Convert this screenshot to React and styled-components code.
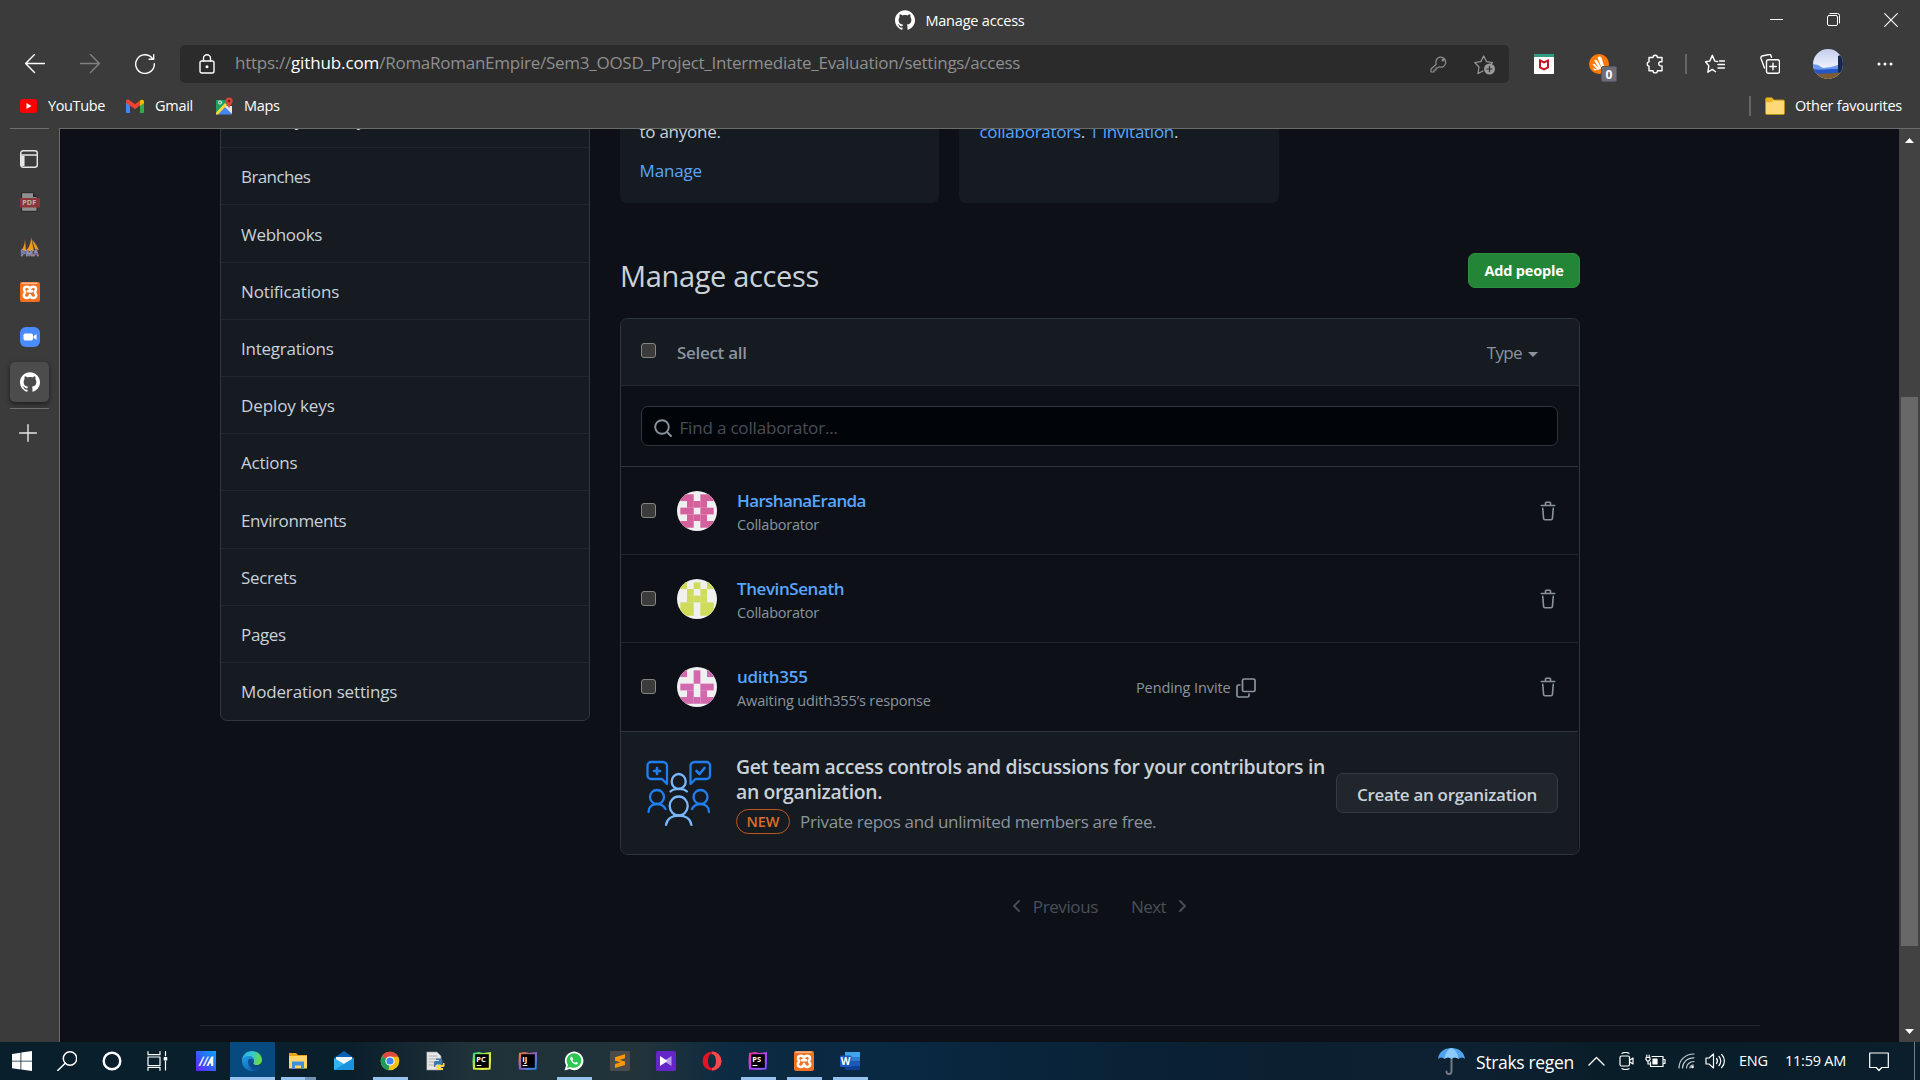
import React from "react";
import styled, { createGlobalStyle } from "styled-components";
import { SiGithub } from "react-icons/si";

const Global = createGlobalStyle`
  *, *::before, *::after { box-sizing: border-box; }
  body { margin: 0; background: #3b3b3b; overflow: hidden; font-family: "Open Sans", "Noto Sans", sans-serif; }
  svg { display: block; flex: none; }
`;

const Text = styled.span`
  font-size: ${(p) => p.$size || 17}px;
  font-weight: ${(p) => p.$weight || 400};
  letter-spacing: ${(p) => p.$track || 0}px;
  color: ${(p) => p.$color || "inherit"};
  line-height: ${(p) => (p.$line ? p.$line + "px" : "inherit")};
  white-space: pre;
`;

/* ---------- browser frame ---------- */
const Screen = styled.div`
  width: 1920px;
  height: 1080px;
  display: grid;
  grid-template-rows: 45px 38px 45px 914px 38px;
  background: #3b3b3b;
  color: #fff;
  overflow: hidden;
`;

const TitleBar = styled.header`
  display: grid;
  grid-template-columns: 1fr auto 1fr;
  align-items: start;
`;
const TitleTab = styled.div`
  display: flex;
  align-items: center;
  gap: 10px;
  height: 40px;
`;
const WindowButtons = styled.div`
  display: flex;
  justify-content: flex-end;
  align-items: center;
  gap: 44px;
  height: 39px;
  padding-right: 22px;
`;

const Toolbar = styled.div`
  display: flex;
  align-items: center;
  padding: 0 27px 0 25px;
`;
const NavButtons = styled.div`
  display: flex;
  gap: 35px;
  width: 155px;
`;
const AddressBar = styled.div`
  width: 1329px;
  height: 38px;
  border-radius: 5px;
  background: #2b2b2b;
  color: #8f8f8f;
  display: flex;
  align-items: center;
  padding: 0 13px 0 19px;
`;
const Url = styled.div`
  display: flex;
  flex: 1;
  padding: 0 0 2px 20px;
  line-height: 36px;
`;
const AddressIcons = styled.div`
  display: flex;
  align-items: center;
  gap: 26px;
`;
const Extensions = styled.div`
  display: flex;
  align-items: center;
  margin-left: 25px;
`;
const ExtensionSlot = styled.div`
  width: ${(p) => p.$w}px;
  display: flex;
`;
const BadgeHost = styled.div`
  position: relative;
  width: 20px;
  height: 20px;
`;
const CountBadge = styled.span`
  position: absolute;
  left: 12px;
  top: 12px;
  width: 16px;
  height: 16px;
  border-radius: 2px;
  background: #6c6c7b;
  border: 1px solid #565660;
  font-size: 12px;
  font-weight: 700;
  line-height: 15px;
  text-align: center;
`;
const Divider = styled.i`
  width: 2px;
  height: 20px;
  background: #666;
`;

const Bookmarks = styled.nav`
  display: flex;
  align-items: center;
  padding: 1px 18px 0 20px;
  line-height: 24px;
`;
const Bookmark = styled.div`
  display: flex;
  align-items: center;
  gap: ${(p) => p.$gap || 11}px;
  margin-right: ${(p) => p.$after || 0}px;
`;
const Spacer = styled.div`
  flex: 1;
`;

const Body = styled.div`
  display: grid;
  grid-template-columns: 59px 1840px 21px;
  overflow: hidden;
`;

/* ---------- vertical tabs ---------- */
const TabStrip = styled.aside`
  display: flex;
  flex-direction: column;
  align-items: center;
  width: 59px;
`;
const StripLine = styled.i`
  width: 39px;
  height: 1px;
  background: #707070;
`;
const StripTab = styled.div`
  width: 39px;
  height: ${(p) => p.$h || 45}px;
  padding-right: ${(p) => p.$shift || 0}px;
  margin-bottom: ${(p) => p.$after || 0}px;
  display: flex;
  align-items: center;
  justify-content: center;
`;
const ActiveTab = styled(StripTab)`
  height: 40px;
  margin: 3px 0 6px;
  border-radius: 5px;
  background: #4c4c4c;
  box-shadow: 0 2px 5px rgba(0, 0, 0, 0.5);
`;

/* ---------- page ---------- */
const Viewport = styled.main`
  background: #0d1117;
  border-top: 1px solid #6b6b6b;
  border-left: 1px solid #6b6b6b;
  color: #c9d1d9;
  overflow: hidden;
`;
const Container = styled.div`
  width: 1560px;
  margin-left: 140px;
  height: 897px;
  padding-left: 20px;
  display: flex;
  gap: 30px;
  border-bottom: 1px solid #21262d;
`;
const Menu = styled.nav`
  width: 370px;
  height: 632px;
  margin-top: -40px;
  border: 1px solid #30363d;
  border-radius: 7px;
  background: #161b22;
`;
const MenuItem = styled.div`
  height: 57.2px;
  display: flex;
  align-items: center;
  padding: 1.2px 0 0 20px;
  line-height: 25px;
  & + & {
    border-top: 1px solid #21262d;
  }
`;
const Content = styled.section`
  width: 960px;
`;
const Cards = styled.div`
  display: flex;
  gap: 20px;
  margin-top: -69px;
`;
const Card = styled.div`
  width: ${(p) => p.$w}px;
  height: 143px;
  border-radius: 7px;
  background: #161b22;
  display: flex;
  flex-direction: column;
  justify-content: flex-end;
  gap: 13px;
  padding: 0 20px ${(p) => p.$bottom}px ${(p) => p.$left}px;
  line-height: 26px;
`;
const HeadingRow = styled.div`
  display: flex;
  justify-content: space-between;
  align-items: flex-start;
  height: 45px;
  margin: 50px 0 20px;
  line-height: 45px;
`;
const GreenButton = styled.button`
  width: 112px;
  height: 35px;
  padding: 0;
  border: 1px solid #2f8e41;
  border-radius: 7px;
  background: #238636;
  color: #fff;
  font-family: inherit;
  line-height: 32px;
`;
const Box = styled.div`
  height: 537px;
  border: 1px solid #30363d;
  border-radius: 7.5px;
  overflow: hidden;
`;
const BoxHeader = styled.div`
  height: 67px;
  border-bottom: 1px solid #21262d;
  background: #161b22;
  color: #8b949e;
  display: flex;
  align-items: center;
  padding: 1px 41px 0 20px;
  line-height: 24px;
`;
const Check = styled.i`
  width: 15px;
  height: 15px;
  margin: ${(p) => p.$lift || "0"} 21px 0 0;
  border: 1px solid #858585;
  border-radius: 3px;
  background: #3b3b3b;
`;
const TypeMenu = styled.div`
  display: flex;
  align-items: center;
  gap: 6px;
  margin-left: auto;
`;
const Caret = styled.i`
  margin-top: 3px;
  border: 5px solid transparent;
  border-top-color: #8b949e;
  border-bottom: 0;
`;
const SearchArea = styled.div`
  height: 81px;
  margin-right: 1px;
  padding: 20px;
  border-bottom: 1px solid #30363d;
`;
const SearchInput = styled.div`
  height: 40px;
  border: 1px solid #30363d;
  border-radius: 7px;
  background: #010409;
  color: #484f58;
  display: flex;
  align-items: center;
  gap: 7.5px;
  padding: 3px 0 0 12px;
`;
const Member = styled.div`
  height: 88px;
  margin-right: 1px;
  border-bottom: 1px solid ${(p) => (p.$last ? "transparent" : "#21262d")};
  display: flex;
  align-items: center;
  padding: 0 20px;
  color: #8b949e;
`;
const Avatar = styled.svg`
  width: 40px;
  height: 40px;
  border-radius: 50%;
  background: #f0f0f0;
`;
const MemberText = styled.div`
  width: 399px;
  margin-left: 20px;
  padding-top: 2px;
  display: flex;
  flex-direction: column;
`;
const Pending = styled.div`
  flex: 1;
  display: flex;
  align-items: center;
  gap: 5px;
  padding-top: 2px;
`;
const Promo = styled.div`
  height: 123px;
  margin-right: 1px;
  border-top: 1px solid #30363d;
  background: #161b22;
  display: flex;
  align-items: center;
  padding: 0 19px 0 25px;
`;
const PromoText = styled.div`
  width: 600px;
  margin-left: 24px;
  padding-top: 2px;
  display: flex;
  flex-direction: column;
`;
const PromoNote = styled.div`
  display: flex;
  align-items: center;
  gap: 10px;
  height: 25px;
  margin-top: 5px;
  color: #8b949e;
`;
const NewBadge = styled.span`
  width: 54px;
  height: 25px;
  border: 1px solid #bd561d;
  border-radius: 13px;
  color: #db6d28;
  text-align: center;
  line-height: 23px;
`;
const GreyButton = styled.button`
  width: 222px;
  height: 40px;
  padding: 2px 0 0;
  border: 1px solid #363b42;
  border-radius: 7px;
  background: #21262d;
  color: #c9d1d9;
  font-family: inherit;
`;
const Pager = styled.div`
  display: flex;
  justify-content: center;
  align-items: center;
  height: 40px;
  margin-top: 31px;
  padding-right: 1px;
  color: #484f58;
`;
const PageLink = styled.div`
  display: flex;
  align-items: center;
  gap: 13px;
  margin: 0 16.5px;
`;

/* ---------- scrollbar ---------- */
const Scrollbar = styled.div`
  border-top: 1px solid #6b6b6b;
  background: #424242;
  display: flex;
  flex-direction: column;
  align-items: center;
  padding: 9px 0 8px;
`;
const Thumb = styled.i`
  width: 17px;
  height: 549px;
  margin: 254px 0 auto;
  background: #686868;
`;

/* ---------- taskbar ---------- */
const Taskbar = styled.footer`
  display: flex;
  background: linear-gradient(90deg, #0a1f2c 0, #0a1f2c 350px, #1f3139 470px, #22343a 640px, #0c2a41 730px, #092842 900px, #092236 1130px, #0c1f30 1300px, #0d2133 1450px, #091d29 1600px, #0a1f2b 100%);
`;
const SystemItem = styled.div`
  width: 45px;
  height: 38px;
  padding-right: 1px;
  display: flex;
  align-items: center;
  justify-content: center;
`;
const Apps = styled.div`
  display: flex;
  gap: 1px;
  padding-left: 4px;
`;
const TaskItem = styled.div`
  width: 45px;
  height: 38px;
  display: grid;
  grid-template-rows: 35px 3px;
  justify-items: center;
  align-items: center;
  background: ${(p) => (p.$active ? "#064a80" : "none")};
  & > svg {
    margin: 3px 1px 0 0;
  }
`;
const Underline = styled.i`
  width: ${(p) => (p.$wide ? 45 : 35)}px;
  height: 3px;
  background: ${(p) => (p.$grouped ? "linear-gradient(90deg, #98c2ee 24px, #7393b5 24px)" : "#98c2ee")};
`;
const Tray = styled.div`
  margin-left: auto;
  display: flex;
  align-items: center;
  width: 482px;
  line-height: 34px;
`;
const TrayCell = styled.div`
  width: ${(p) => p.$w}px;
  padding-top: ${(p) => p.$down || 0}px;
  display: flex;
`;
const DesktopEdge = styled.i`
  width: 1px;
  height: 38px;
  background: #718087;
`;

/* ---------- icons ---------- */
const Icon = ({ w = 20, h = 20, box, s = "none", sw = 1.4, f = "none", children }) => (
  <svg width={w} height={h} viewBox={box || `0 0 ${w} ${h}`} fill={f} stroke={s} strokeWidth={sw} strokeLinecap="round" strokeLinejoin="round">
    {children}
  </svg>
);

const Xampp = () => (
  <Icon>
    <rect width="20" height="20" rx="2" fill="#f37021" />
    <path d="M2 1.2h15" stroke="#f9b98f" />
    <path d="M7.800 9.200h4.400M10 7.500C9.500 3.800 4 4.200 4 7.300c0 1.400 1 1.800 1 2.900s-1.200 1.500-1.200 3.200c0 3.400 5.600 3.600 6.200-.4.6 4 6.200 3.800 6.200.4 0-1.700-1.200-2.100-1.200-3.200s1-1.500 1-2.900c0-3.100-5.500-3.500-6 .2z" stroke="#fff" strokeWidth="2.500" />
  </Icon>
);

const Trash = () => (
  <Icon w={20} h={20} box="0 0 20 20" s="#8b949e" sw={1.6}>
    <path d="M3.300 4.500h13.400M7.500 4.200V2a.8.8 0 0 1 .8-.8h3.400a.8.8 0 0 1 .8.800v2.200M4.700 7.200l.9 10.300a1.300 1.300 0 0 0 1.300 1.200h6.200a1.300 1.300 0 0 0 1.300-1.200l.9-10.300" />
  </Icon>
);

const Identicon = ({ rows, color }) => (
  <Avatar viewBox="0 0 420 420">
    {rows.map((row, y) =>
      [...row].map((c, x) => (c === "1" ? <rect key={`${x}-${y}`} x={35 + x * 70} y={35 + y * 70} width="70.500" height="70.500" fill={color} /> : null))
    )}
  </Avatar>
);

const TeamIcon = () => (
  <Icon w={66} h={67} s="#1f7ff0" sw={2.3}>
    <path d="M5 2h12a4 4 0 0 1 4 4v18l-5-5H5a3.500 3.500 0 0 1-3.500-3.500V5.500A3.500 3.500 0 0 1 5 2zM60.500 2h-12a4 4 0 0 0-4 4v18l5-5h11a3.500 3.500 0 0 0 3.500-3.500V5.500A3.500 3.500 0 0 0 60.500 2z" />
    <path d="M11 8v6M8 11h6M50.500 11l3 3 5-6" strokeWidth="2.600" />
    <circle cx="11" cy="37" r="7" />
    <circle cx="54.500" cy="37" r="7" />
    <path d="M2.500 52c0-5 3.500-8 8.500-8s7 2 8.500 5M63 52c0-5-3.500-8-8.500-8s-7 2-8.500 5" />
    <g stroke="#79b8ff">
      <ellipse cx="32.700" cy="21.500" rx="7" ry="7.500" />
      <path d="M24.500 31.500c2-2 5-2.600 8.200-2.600s6.200.6 8.200 2.600" />
      <ellipse cx="32.700" cy="46" rx="9" ry="9.500" />
      <path d="M20 64.800c1-6 6-9.300 12.700-9.300s11.800 3.300 12.700 9.300" />
    </g>
  </Icon>
);

const Jet = ({ label, a, b, c }) => (
  <Icon>
    <defs>
      <linearGradient id={`jet${label}`} x1="0" y1="0" x2="1" y2="1">
        <stop offset="0" stopColor={a} />
        <stop offset=".5" stopColor={b} />
        <stop offset="1" stopColor={c} />
      </linearGradient>
    </defs>
    <path d="M1 2l6-1 4 1 8-1v9l-.5 8.500-8.500.5-9-.5-.5-8z" fill={`url(#jet${label})`} />
    <rect x="3.200" y="3.200" width="13.600" height="13.600" fill="#000" />
    <text x="4.300" y="10.600" fontSize="7.500" fontWeight="700" fill="#fff" fontFamily="Open Sans, sans-serif">{label}</text>
    <path d="M5 14.500h4" stroke="#fff" strokeWidth="1" />
  </Icon>
);

const EdgeIcon = () => (
  <Icon>
    <defs>
      <linearGradient id="edgeTop" x1="0" y1="0" x2="1" y2=".3">
        <stop offset="0" stopColor="#2aa9e8" />
        <stop offset=".5" stopColor="#35c6d6" />
        <stop offset="1" stopColor="#67d94d" />
      </linearGradient>
      <linearGradient id="edgeLow" x1="0" y1="0" x2="1" y2="1">
        <stop offset="0" stopColor="#1ba0e6" />
        <stop offset="1" stopColor="#0c59a4" />
      </linearGradient>
    </defs>
    <path d="M0 10C0 4 4.500 0 10 0s10 4 10 9c0 3-2.500 5-5.500 5-2.500 0-3.500-1-3-2C13 9 11 5.500 7 5.500S1 8 0 10z" fill="url(#edgeTop)" />
    <path d="M0 10c.5-3 3-5 6.500-5S12 7 12 9c-2 0-3.500 2-3 4.500.6 3 4 5 8.500 3.500C14 21 8 21 4 18 1.500 16 0 13.500 0 10z" fill="url(#edgeLow)" />
    <path d="M6 10c0 4 2 8.500 6.500 9.500C16 19 18 17 18.500 15.500 14 17.500 9.500 16 9 12.500 8.800 10.500 10 9 11.500 8.500 9 7 6 8 6 10z" fill="#0f4e96" />
  </Icon>
);

const MENU = [
  ["Security & analysis", -0.15],
  ["Branches", -0.6],
  ["Webhooks", -0.3],
  ["Notifications", -0.15],
  ["Integrations", -0.24],
  ["Deploy keys", -0.1],
  ["Actions", -0.22],
  ["Environments", -0.4],
  ["Secrets", -0.3],
  ["Pages", -0.35],
  ["Moderation settings", -0.15],
];

const MEMBERS = [
  { name: "HarshanaEranda", track: -0.62, note: "Collaborator", noteTrack: -0.22, color: "#d4619b", rows: ["11011", "01110", "11011", "01110", "11011"] },
  { name: "ThevinSenath", track: -0.42, note: "Collaborator", noteTrack: -0.22, color: "#cfdb5b", rows: ["10101", "01010", "01110", "11011", "11011"] },
  { name: "udith355", track: -0.28, note: "Awaiting udith355’s response", noteTrack: -0.13, color: "#d268ad", rows: ["10101", "00100", "11011", "01010", "11111"], pending: true },
];

const APPS = [
  {
    id: "asus",
    icon: (
      <Icon>
        <defs>
          <linearGradient id="asus" x1="0" y1="1" x2="1" y2="0">
            <stop offset="0" stopColor="#6b1cff" />
            <stop offset=".5" stopColor="#2f62f5" />
            <stop offset="1" stopColor="#0aa5ff" />
          </linearGradient>
        </defs>
        <rect width="20" height="20" fill="url(#asus)" />
        <path d="M2.300 15L7 5.500h1.800L4.300 15zM6.500 15l4.900-9.500h1.800L8.500 15z" fill="#fff" opacity=".8" />
        <path d="M10.300 15l5-9.500h2V15h-2.200v-2.500h-1.600L12.400 15z" fill="#fff" />
      </Icon>
    ),
  },
  { id: "edge", active: true, run: true, icon: <EdgeIcon /> },
  {
    id: "explorer",
    run: true,
    grouped: true,
    icon: (
      <Icon>
        <path d="M1 2h7l2 2h9v3H1z" fill="#e8a317" />
        <rect x="1" y="5" width="18" height="12.500" fill="#ffd667" />
        <path d="M4 18v-7.500h12V18h-3v-3.500H7V18z" fill="#3f8fdc" />
      </Icon>
    ),
  },
  {
    id: "mail",
    icon: (
      <Icon>
        <path d="M0 7l10-7 10 7v12H0z" fill="#0a62b5" />
        <path d="M2 6h16v7H2z" fill="#f3f6fa" />
        <path d="M0 7l10 6 10-6v12H0z" fill="#30b3f0" />
        <path d="M0 19L20 7v12z" fill="#1a93de" />
      </Icon>
    ),
  },
  {
    id: "chrome",
    run: true,
    icon: (
      <Icon>
        <circle cx="10" cy="10" r="9.300" fill="#fbc116" />
        <path d="M10 10L2 5.200A9.300 9.300 0 0 1 18.200 5.700H10z" fill="#dd4b3e" />
        <path d="M10 10L2 5.200a9.300 9.300 0 0 0 6.500 14z" fill="#1e9b57" />
        <circle cx="10" cy="10" r="4.600" fill="#fff" />
        <circle cx="10" cy="10" r="3.600" fill="#4285f4" />
      </Icon>
    ),
  },
  {
    id: "python",
    icon: (
      <Icon>
        <path d="M1 1h10l4 4v14H1z" fill="#e6e6e6" stroke="#999" strokeWidth=".6" />
        <path d="M3 5h8M3 8h8M3 11h6M3 14h5" stroke="#b3b3b3" strokeWidth="1" />
        <path d="M8 14v-2.500c0-1 .7-1.500 1.500-1.500h3.500V9h-3V7.500h4.500c1.200 0 2 .8 2 2V12c0 1-.7 1.500-1.500 1.500h-4c-1 0-1.500.8-1.500 1.500v1H8z" fill="#3c76aa" />
        <path d="M18.500 12v2.500c0 1-.7 1.500-1.500 1.500h-3.500v1h3.500v2H13c-1.500 0-2.500-.5-2.500-1.500V15.500c0-1 .7-1.500 1.500-1.500h3.500c1 0 1.500-.6 1.500-1.500V12z" fill="#ffd845" />
      </Icon>
    ),
  },
  { id: "pycharm", icon: <Jet label="PC" a="#21d789" b="#c9e93c" c="#fcf84a" /> },
  { id: "idea", icon: <Jet label="IJ" a="#fc801d" b="#8a5fc8" c="#159bf5" /> },
  {
    id: "whatsapp",
    run: true,
    icon: (
      <Icon>
        <path d="M.5 19.500l1.600-5A9.300 9.300 0 1 1 5.700 18z" fill="#fff" />
        <path d="M3 17l1-3.200A7.300 7.300 0 1 1 6.500 16z" fill="#2fc553" />
        <path d="M7 5.800c-1.500 1-1 3 .8 5.200s4.300 3.300 5.600 2c1-1 .6-1.300-.9-2-.8-.3-1 .8-1.500.7C9.600 11.300 8.600 10 8.500 9.400c0-.5.900-.7.500-1.500-.4-1.300-.9-2.500-2-2.100z" fill="#fff" />
      </Icon>
    ),
  },
  {
    id: "sublime",
    icon: (
      <Icon>
        <rect width="20" height="20" rx="1.500" fill="#4b4b4b" />
        <path d="M5 6.200l10-3v4L9.500 8.900 15 10.500V14L5 17v-4l5.500-1.700L5 9.700z" fill="#ff9800" />
      </Icon>
    ),
  },
  {
    id: "player",
    icon: (
      <Icon>
        <rect width="20" height="20" rx="1.500" fill="#6426c9" />
        <path d="M15.500 5L8 10l7.500 5z" fill="#b99ae8" />
        <path d="M4 5l7.500 5L4 15z" fill="#fff" />
      </Icon>
    ),
  },
  {
    id: "opera",
    icon: (
      <Icon>
        <path fillRule="evenodd" d="M10 .5a9.500 9.500 0 1 0 0 19 9.500 9.500 0 1 0 0-19zM10 3c2.600 0 4 3.200 4 7s-1.400 7-4 7-4-3.200-4-7 1.400-7 4-7z" fill="#e01426" />
        <path d="M10 .5a9.500 9.500 0 0 1 0 19v-2.500c2.600 0 4-3.200 4-7s-1.400-7-4-7z" fill="#f24a4e" />
      </Icon>
    ),
  },
  { id: "phpstorm", run: true, icon: <Jet label="PS" a="#ff318c" b="#b345f1" c="#765af8" /> },
  { id: "xampp", run: true, icon: <Xampp /> },
  {
    id: "word",
    run: true,
    icon: (
      <Icon>
        <rect x="5" y="1" width="15" height="5" fill="#41a5ee" />
        <rect x="5" y="6" width="15" height="4.500" fill="#2b7cd3" />
        <rect x="5" y="10.500" width="15" height="4.500" fill="#185abd" />
        <rect x="5" y="15" width="15" height="4" fill="#103f91" />
        <rect x="0" y="4.500" width="11.500" height="11.500" rx="1" fill="#185abd" />
        <text x=".8" y="13.900" fontSize="10" fontWeight="700" fill="#fff" fontFamily="Open Sans, sans-serif">W</text>
      </Icon>
    ),
  },
];

export default function App() {
  return (
    <Screen>
      <Global />
      <TitleBar>
        <span />
        <TitleTab>
          <SiGithub size={20} color="#fff" />
          <Text $size={14.5} $track={-0.2}>Manage access</Text>
        </TitleTab>
        <WindowButtons>
          <Icon w={13} h={13} s="#fff" sw={1}><path d="M0 6.500h13" /></Icon>
          <Icon w={13} h={13} s="#fff" sw={1}><rect x=".5" y="2.500" width="10" height="10" rx="1.500" /><path d="M3 .5h7.500a2 2 0 0 1 2 2V10" /></Icon>
          <Icon w={14} h={14} s="#fff" sw={1.1}><path d="M.7.700l12.600 12.600M13.300.7L.7 13.300" /></Icon>
        </WindowButtons>
      </TitleBar>

      <Toolbar>
        <NavButtons>
          <Icon s="#fff"><path d="M19.500 9.500H.7M9.500.5L.6 9.500l8.900 9" /></Icon>
          <Icon s="#808080"><path d="M.5 9.500h18.800M10.500.5l8.900 9-8.900 9" /></Icon>
          <Icon s="#fff"><path d="M17.200 4.200A9.300 9.300 0 1 0 19.300 9.700M18.700.700v4.500h-4.600" /></Icon>
        </NavButtons>
        <AddressBar>
          <Icon w={16} h={20} s="#fff"><rect x="1" y="7" width="14" height="12" rx="1.800" /><path d="M4.500 7V4.300a3.500 3.500 0 0 1 7 0V7" /><circle cx="8" cy="12.800" r=".8" fill="#fff" /></Icon>
          <Url>
            <Text $track={-0.25}>https://</Text>
            <Text $track={-0.12} $color="#fff">github.com</Text>
            <Text $track={-0.255}>/RomaRomanEmpire/Sem3_OOSD_Project_Intermediate_Evaluation/settings/access</Text>
          </Url>
          <AddressIcons>
            <Icon w={18} h={18} s="#8f8f8f" sw={1.2}><path d="M6.300 9.300A5 5 0 1 1 9 11.800L7.500 13H6v2H4v2H1v-3z" /><circle cx="13" cy="5" r=".9" /></Icon>
            <Icon w={22} h={21} s="#9a9a9a" sw={1.2}>
              <path d="M9 17l-5 2.500L5 13 .8 8.500l6-.9L9.700 2l2.800 5.600 6 .9-1.500 1.500" />
              <circle cx="15.500" cy="15" r="5.500" fill="#9a9a9a" stroke="none" /><path d="M15.500 12.300v5.400M12.800 15h5.400" stroke="#2b2b2b" />
            </Icon>
          </AddressIcons>
        </AddressBar>
        <Extensions>
          <ExtensionSlot $w={55}>
            <Icon><rect width="20" height="20" fill="#fff" /><rect width="20" height="3" fill="#2f9e86" /><path d="M6 6.500l4 2 4-2v7L10 15.500 6 13.500z" stroke="#c01728" strokeWidth="2" strokeLinejoin="miter" /></Icon>
          </ExtensionSlot>
          <ExtensionSlot $w={56}>
            <BadgeHost>
              <Icon><circle cx="10" cy="10" r="10" fill="#ff7800" /><path d="M8.500 3.500c1.500-1.500 3.500-1 4.200.7l2.800 9.300-2.500 1.500zM5.200 6.500c1-1.200 2.200-.9 3.200.5l4 7-1.800 1.500zM3.500 10.300c.8-.9 1.900-.7 2.900.2l4 4.500-1.500 1.200zM3.500 14.300l4.500 1-2 1.500z" fill="#fff" /></Icon>
              <CountBadge>0</CountBadge>
            </BadgeHost>
          </ExtensionSlot>
          <ExtensionSlot $w={40}>
            <Icon s="#fff"><path d="M3.500 3.500H7.500a2.200 2.200 0 0 1 4.400 0H16.500v4.200h-1.200a2.100 2.100 0 0 0 0 4.200h1.200v4.800H11.900a2.200 2.200 0 0 1-4.400 0H3.500V12.200a2.300 2.300 0 0 1 0-4.500z" transform="translate(.5 0)" /></Icon>
          </ExtensionSlot>
          <ExtensionSlot $w={20}><Divider /></ExtensionSlot>
          <ExtensionSlot $w={55}>
            <Icon s="#fff"><path d="M12.500 7.500l-2.700-.4L7.300 1.300 4.800 7.100l-4.300.6 3.300 4.100-.9 6.400 4.400-2.800 3.200 2.300M13 10.500h6.500M13 14h6.500M14.500 7h5" /></Icon>
          </ExtensionSlot>
          <ExtensionSlot $w={53}>
            <Icon s="#fff"><path d="M4.500 14L1 4.500C.7 3.300 1 2.500 2 2l7-1.500c1-.2 1.800.2 2 1.200l.5 1.500" /><rect x="6.500" y="5.700" width="13" height="13.500" rx="2" /><path d="M13 9.200v6.500M9.800 12.500h6.500" /></Icon>
          </ExtensionSlot>
          <ExtensionSlot $w={64}>
            <svg width="30" height="30" viewBox="0 0 30 30">
              <defs>
                <clipPath id="profileClip"><circle cx="15" cy="15" r="15" /></clipPath>
                <linearGradient id="profileSky" x1="0" y1="0" x2="0" y2="1"><stop offset="0" stopColor="#c3cdef" /><stop offset=".6" stopColor="#eef1fb" /></linearGradient>
              </defs>
              <g clipPath="url(#profileClip)">
                <rect width="30" height="30" fill="url(#profileSky)" />
                <path d="M25 7l5-2v19h-6l1-8z" fill="#15264f" />
                <path d="M0 15l5 1 5 3 8-1 7-2v9H0z" fill="#6b97ee" />
                <path d="M0 20c6 1.500 14 0 25 0v5H0z" fill="#2456c4" />
                <path d="M0 24c8 1.500 18 0 30-.5v7H0z" fill="#7d5c33" />
              </g>
            </svg>
          </ExtensionSlot>
          <Icon w={16} h={4} f="#fff"><circle cx="2" cy="2" r="1.500" /><circle cx="8" cy="2" r="1.500" /><circle cx="14" cy="2" r="1.500" /></Icon>
        </Extensions>
      </Toolbar>

      <Bookmarks>
        <Bookmark $after={21}>
          <Icon w={17} h={14}><rect width="17" height="14" rx="3" fill="#f00" /><path d="M6.500 4l5 3-5 3z" fill="#fff" /></Icon>
          <Text $size={14.5} $track={-0.37}>YouTube</Text>
        </Bookmark>
        <Bookmark $after={23}>
          <Icon w={18} h={14}>
            <path d="M0 2v11c0 .6.400 1 1 1h3V5z" fill="#4285f4" />
            <path d="M18 2v11c0 .6-.4 1-1 1h-3V5z" fill="#34a853" />
            <path d="M0 2.500C0 .5 2 0 3.300 1L9 5.200 14 1.500v5L9 10.200 4 6.500 0 4z" fill="#ea4335" />
            <path d="M14 1.400C15.800 0 18 .6 18 2.700V4l-4 3z" fill="#fbbc04" />
          </Icon>
          <Text $size={14.5} $track={-0.3}>Gmail</Text>
        </Bookmark>
        <Bookmark $gap={11}>
          <Icon w={17} h={18}>
            <path d="M0 3h12v6L0 17z" fill="#1e9e60" /><path d="M0 17.500L10 7l6 10.500z" fill="#4a86f0" /><path d="M8 9l8 8V9z" fill="#e8e8e8" /><path d="M0 15.500L9 6l2 2-9 9.500H0z" fill="#fdd835" />
            <path d="M13 12c0-3-3.500-5-3.500-8a3.600 3.600 0 0 1 7.200 0c0 3-3.700 5-3.700 8z" fill="#dc4437" /><circle cx="13" cy="4" r="1.300" fill="#7a1c14" /><circle cx="4" cy="5.500" r="1.600" stroke="#fff" strokeWidth=".9" />
          </Icon>
          <Text $size={14.5} $track={-0.3}>Maps</Text>
        </Bookmark>
        <Spacer />
        <Bookmark $gap={10}>
          <Divider />
          <Icon w={24} h={18} box="-4 0 24 18"><path d="M.5 2.500c0-1 .5-1.700 1.500-1.700h5L9 3h9c1 0 1.500.5 1.500 1.500V16c0 1-.5 1.500-1.500 1.500H2c-1 0-1.500-.5-1.500-1.500z" fill="#ffd977" stroke="#b98d10" strokeWidth="1" /><path d="M1 2.500C1 1.700 1.500 1.300 2 1.300h4.800l1.500 2L7 5.200H1z" fill="#e8b51c" /></Icon>
          <Text $size={14.5} $track={-0.24}>Other favourites</Text>
        </Bookmark>
      </Bookmarks>

      <Body>
        <TabStrip>
          <StripLine />
          <StripTab $h={60} $shift={1}><Icon w={18} h={18} s="#e6e6e6"><rect x=".7" y=".7" width="16.600" height="16.600" rx="2.500" /><path d="M1 5h16" /><path d="M2.800 6v10" strokeWidth="3.500" strokeLinecap="butt" /></Icon></StripTab>
          <StripTab $h={26} $after={9}>
            <Icon><path d="M2 .700h11l4 4V19.300H2z" fill="#8f8f8f" stroke="#262626" strokeWidth="1" /><path d="M13 1v4h4z" fill="#262626" /><rect x="0" y="6" width="20" height="9.500" fill="#8e3438" /><text x="2.300" y="13.400" fontSize="7.200" fontWeight="700" fill="#b5b5b5" fontFamily="Open Sans, sans-serif">PDF</text></Icon>
          </StripTab>
          <StripTab>
            <Icon><path d="M1 14C4 10 5 6 5 2l1 12zM6 14c4-5 5-9 5-14l3 14zM12 3c4 3 5 7 7 10l-4-1z" fill="#ef9722" /><text x=".4" y="19.400" fontSize="8" fontWeight="700" fill="#4c4c86" stroke="#c9c9dd" strokeWidth=".4" fontFamily="Open Sans, sans-serif">PMA</text></Icon>
          </StripTab>
          <StripTab><Xampp /></StripTab>
          <StripTab><Icon><rect width="20" height="20" rx="6" fill="#4a8cff" /><rect x="3.500" y="6.500" width="9.500" height="7" rx="1.700" fill="#fff" /><path d="M13.500 9.300l3-2.300v6l-3-2.300z" fill="#fff" /></Icon></StripTab>
          <ActiveTab><SiGithub size={20} color="#fff" /></ActiveTab>
          <StripLine />
          <StripTab $h={48} $shift={3}><Icon w={18} h={18} s="#e6e6e6"><path d="M9 .7v16.600M.7 9h16.600" /></Icon></StripTab>
        </TabStrip>

        <Viewport>
          <Container>
            <Menu>
              {MENU.map(([label, track]) => (
                <MenuItem key={label}><Text $track={track}>{label}</Text></MenuItem>
              ))}
            </Menu>
            <Content>
              <Cards>
                <Card $w={319} $left={19.5} $bottom={19}>
                  <Text $track={-0.26}>to anyone.</Text>
                  <Text $track={-0.15} $color="#58a6ff">Manage</Text>
                </Card>
                <Card $w={320} $left={20.5} $bottom={58}>
                  <Text $track={-0.27}><Text $track={-0.27} $color="#58a6ff">collaborators</Text>. <Text $track={-0.27} $color="#58a6ff">1 invitation</Text>.</Text>
                </Card>
              </Cards>
              <HeadingRow>
                <Text $size={29} $track={-0.35}>Manage access</Text>
                <GreenButton><Text $size={14.5} $weight={700} $track={-0.2}>Add people</Text></GreenButton>
              </HeadingRow>
              <Box>
                <BoxHeader>
                  <Check $lift="-4px" />
                  <Text $weight={600} $track={-0.3}>Select all</Text>
                  <TypeMenu><Text $track={-0.65}>Type</Text><Caret /></TypeMenu>
                </BoxHeader>
                <SearchArea>
                  <SearchInput>
                    <Icon w={18} h={18} s="#8b949e" sw={1.900}><circle cx="8" cy="8" r="6.800" /><path d="M13 13l4 4" /></Icon>
                    <Text $track={-0.18}>Find a collaborator...</Text>
                  </SearchInput>
                </SearchArea>
                {MEMBERS.map((m, i) => (
                  <Member key={m.name} $last={i === MEMBERS.length - 1}>
                    <Check />
                    <Identicon rows={m.rows} color={m.color} />
                    <MemberText>
                      <Text $weight={600} $track={m.track} $color="#58a6ff" $line={25}>{m.name}</Text>
                      <Text $size={14.5} $track={m.noteTrack} $line={23}>{m.note}</Text>
                    </MemberText>
                    <Pending>
                      {m.pending && (
                        <>
                          <Text $size={14.5} $track={-0.1}>Pending Invite</Text>
                          <Icon s="#8b949e" sw={1.700}><rect x="6.500" y="1" width="12.500" height="12.500" rx="1.500" /><path d="M3.800 7H2.500A1.500 1.500 0 0 0 1 8.500v9A1.500 1.500 0 0 0 2.500 19h9a1.500 1.500 0 0 0 1.500-1.500v-1.300" /></Icon>
                        </>
                      )}
                    </Pending>
                    <Trash />
                  </Member>
                ))}
                <Promo>
                  <TeamIcon />
                  <PromoText>
                    <Text $size={19.4} $weight={600} $track={-0.34} $line={25}>{"Get team access controls and discussions for your contributors in\nan organization."}</Text>
                    <PromoNote>
                      <NewBadge><Text $size={14.5} $weight={600}>NEW</Text></NewBadge>
                      <Text $track={-0.32}>Private repos and unlimited members are free.</Text>
                    </PromoNote>
                  </PromoText>
                  <GreyButton><Text $weight={600} $track={-0.31}>Create an organization</Text></GreyButton>
                </Promo>
              </Box>
              <Pager>
                <PageLink><Icon w={7} h={12} s="#484f58" sw={1.800}><path d="M6 1L1 6l5 5" /></Icon><Text $track={-0.4}>Previous</Text></PageLink>
                <PageLink><Text $track={-0.5}>Next</Text><Icon w={7} h={12} s="#484f58" sw={1.800}><path d="M1 1l5 5-5 5" /></Icon></PageLink>
              </Pager>
            </Content>
          </Container>
        </Viewport>

        <Scrollbar>
          <Icon w={9} h={5} f="#fff"><path d="M4.500 0L9 5H0z" /></Icon>
          <Thumb />
          <Icon w={9} h={5} f="#fff"><path d="M4.500 5L0 0h9z" /></Icon>
        </Scrollbar>
      </Body>

      <Taskbar>
        <SystemItem><Icon f="#fff"><path d="M0 3l8.500-1.300v8H0zM9.300 1.500L20 0v9.700H9.300zM0 10.500h8.500v8L0 17.200zM9.300 10.500H20V20L9.300 18.500z" /></Icon></SystemItem>
        <SystemItem><Icon s="#fff" sw={1.5}><circle cx="13" cy="7.500" r="6.700" /><path d="M8.200 12.300L.7 19.500" /></Icon></SystemItem>
        <SystemItem><Icon s="#fff" sw={2.4}><circle cx="10" cy="10" r="8.300" /></Icon></SystemItem>
        <SystemItem><Icon w={21} h={20} s="#fff" sw={1.2}><path d="M1 .7v3h12v-3M1 19.300v-3h12v3M1 6h12v8.500H1zM18.500.700v4M18.500 10v9" /><rect x="17.300" y="6.500" width="2.400" height="2.400" fill="#fff" /></Icon></SystemItem>
        <Apps>
          {APPS.map((a) => (
            <TaskItem key={a.id} $active={a.active}>
              {a.icon}
              {a.run && <Underline $wide={a.active} $grouped={a.grouped} />}
            </TaskItem>
          ))}
        </Apps>
        <Tray>
          <TrayCell $w={38}>
            <Icon w={27} h={30}>
              <path d="M13.500 11v14c0 4-5 4-5 .5" stroke="#747b80" strokeWidth="2" />
              <path d="M0 13C1 5.500 6.500 2 13.500 2S26 5.500 27 13c-2-2-4.500-2-6.500 0-2-2-5-2-7 0-2-2-5-2-7 0-2-2-4.500-2-6.500 0z" fill="#4da3f0" />
              <path d="M13.500 2C9 4 7 8 6.500 13c2-2 5-2 7 0 2-2 5-2 7 0C20 8 18 4 13.500 2z" fill="#8ccbfb" />
            </Icon>
          </TrayCell>
          <TrayCell $w={112} $down={1}><Text $size={17.5} $track={-0.33}>Straks regen</Text></TrayCell>
          <TrayCell $w={31}><Icon w={17} h={10} s="#fff"><path d="M1 9l7.500-7.500L16 9" /></Icon></TrayCell>
          <TrayCell $w={26}><Icon w={15} h={18} s="#fff" sw={1.2}><rect x="1" y="4" width="9.500" height="10" rx="1.500" /><path d="M11 8l3-2v6l-3-2M3 1.300c2-.9 5-.9 7 0M3 16.700c2 .9 5 .9 7 0" /></Icon></TrayCell>
          <TrayCell $w={33}><Icon w={21} h={14} s="#fff" sw={1.2}><path d="M7 2.500h11v10H5.500V8M18.500 5.500h1.500v4h-1.500" /><rect x="8" y="5" width="4" height="5" fill="#fff" /><path d="M1 3.500h4v2.200L3.700 7H2.300L1 5.700zM1.800 1v2M4.200 1v2M3 7v3h2" /></Icon></TrayCell>
          <TrayCell $w={27}><Icon w={17} h={16} s="#c4cbd0" sw={1.2}><path d="M1 15C1 7.500 7 1 16 1M4.500 15C4.500 9.500 9 4.800 16 4.800M8.500 15c0-3.500 3-6.500 7.500-6.500" /><path d="M12 15c0-2 1.500-3 3.500-3" /><circle cx="14.500" cy="14" r="1.300" fill="#fff" stroke="none" /></Icon></TrayCell>
          <TrayCell $w={34}><Icon w={21} h={18} s="#fff" sw={1.2}><path d="M1 6h3l4.500-4v14L4 12H1z" /><path d="M11.500 6.500c1.300 1.500 1.300 3.500 0 5M14 4.500c2.300 2.500 2.300 6.500 0 9M16.700 2.500c3.600 3.500 3.600 9.500 0 13" /></Icon></TrayCell>
          <TrayCell $w={46}><Text $size={14.5} $track={-0.2}>ENG</Text></TrayCell>
          <TrayCell $w={84}><Text $size={14.5} $track={-0.25}>11:59 AM</Text></TrayCell>
          <TrayCell $w={45} $down={2}><Icon w={20} h={20} s="#fff" sw={1.2}><path d="M.700 1h18.600v14.500h-6.500L10 18.500l-2.800-3H.7z" /></Icon></TrayCell>
          <DesktopEdge />
        </Tray>
      </Taskbar>
    </Screen>
  );
}
